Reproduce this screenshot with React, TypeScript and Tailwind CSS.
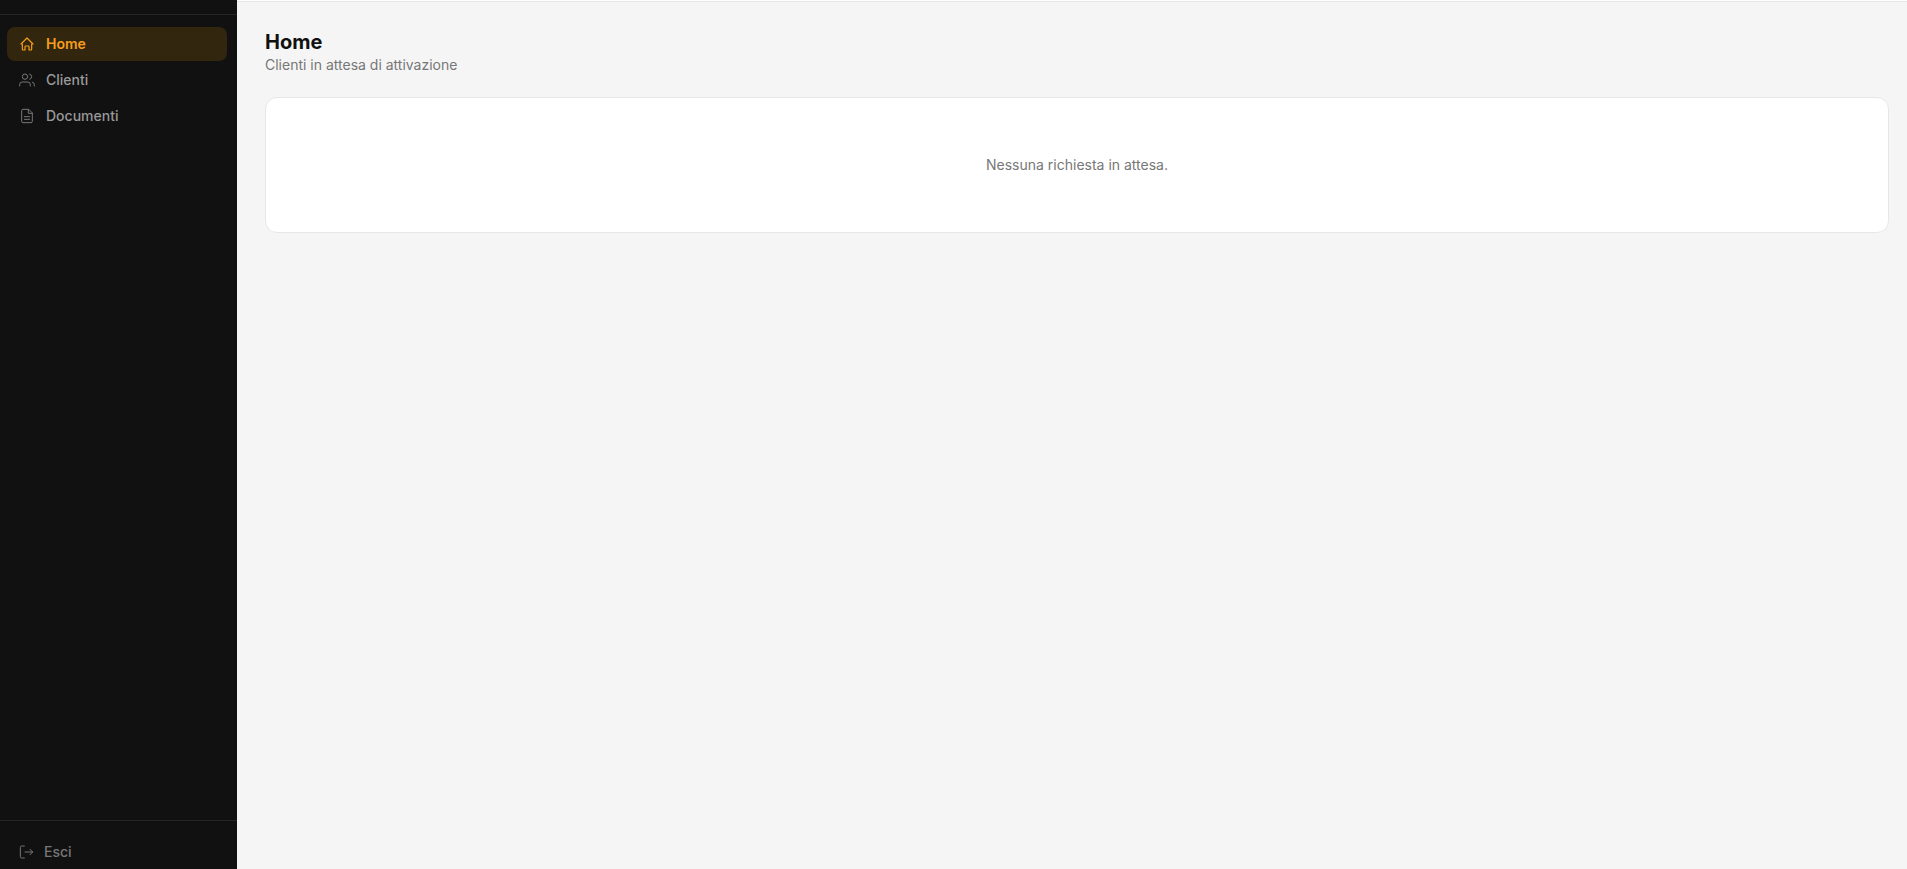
import type { ReactNode } from "react";

function Icon({ children }: { children: ReactNode }) {
    return (
        <svg
            viewBox="0 0 24 24"
            fill="none"
            stroke="currentColor"
            strokeWidth={1.5}
            strokeLinecap="round"
            strokeLinejoin="round"
            className="size-4 shrink-0"
            aria-hidden="true"
        >
            {children}
        </svg>
    );
}

const navItems = [
    {
        label: "Home",
        href: "#home",
        active: true,
        icon: (
            <path
                strokeWidth={1.8}
                d="M5 12H3l9-9 9 9h-2v8a1 1 0 0 1-1 1h-3v-5a1 1 0 0 0-1-1h-4a1 1 0 0 0-1 1v5H6a1 1 0 0 1-1-1z"
            />
        ),
    },
    {
        label: "Clienti",
        href: "#clienti",
        active: false,
        icon: (
            <>
                <path d="M17 21v-2a4 4 0 0 0-4-4H5a4 4 0 0 0-4 4v2" />
                <circle cx="9" cy="7" r="4" />
                <path d="M23 21v-2a4 4 0 0 0-3-3.87" />
                <path d="M16 3.13a4 4 0 0 1 0 7.75" />
            </>
        ),
    },
    {
        label: "Documenti",
        href: "#documenti",
        active: false,
        icon: (
            <>
                <path d="M14 2H6a2 2 0 0 0-2 2v16a2 2 0 0 0 2 2h12a2 2 0 0 0 2-2V8z" />
                <path d="M14 2v6h6" />
                <path d="M8 13h8" />
                <path d="M8 17h8" />
            </>
        ),
    },
];

function Sidebar() {
    return (
        <aside className="flex w-[237px] shrink-0 flex-col bg-[#111111]">
            <div className="h-[15px] border-b border-[#262626]" />
            <nav className="flex flex-1 flex-col gap-0.5 pt-3 pr-2.5 pl-[7px]">
                {navItems.map((item) => (
                    <a
                        key={item.label}
                        href={item.href}
                        aria-current={item.active ? "page" : undefined}
                        className={
                            item.active
                                ? "flex h-[34px] items-center gap-[11px] rounded-lg bg-[#33260f] px-3 text-sm font-semibold text-[#f59e1b]"
                                : "flex h-[34px] items-center gap-[11px] rounded-lg px-3 text-sm font-medium text-[#999999]"
                        }
                    >
                        <span className={item.active ? "" : "text-[#777777]"}>
                            <Icon>{item.icon}</Icon>
                        </span>
                        {item.label}
                    </a>
                ))}
            </nav>
            <div className="border-t border-[#262626] pt-3.5 pr-2.5 pl-[7px]">
                <button
                    type="button"
                    className="flex h-[34px] w-full items-center gap-[9px] rounded-lg px-3 text-sm font-medium text-[#777777]"
                >
                    <Icon>
                        <path d="M8 21H4a2 2 0 0 1-2-2V5a2 2 0 0 1 2-2h4" />
                        <path d="m16.5 8 4 4-4 4" />
                        <path d="M20.5 12H9" />
                    </Icon>
                    Esci
                </button>
            </div>
        </aside>
    );
}

export default function App() {
    return (
        <div className="flex min-h-screen bg-[#f5f5f5] font-['Inter',sans-serif]">
            <Sidebar />
            <div className="flex min-w-0 flex-1 flex-col">
                <header className="h-0.5 border-b border-[#e5e5e5] bg-white" />
                <main className="pt-7 pr-[18px] pl-7">
                    <h1 className="text-xl leading-6 font-bold text-[#111111]">Home</h1>
                    <p className="text-sm leading-[22px] text-[#777777]">
                        Clienti in attesa di attivazione
                    </p>
                    <section className="mt-[21px] rounded-xl border border-[#e7e7e7] bg-white px-6 py-14 text-center">
                        <p className="text-sm leading-[22px] text-[#777777]">
                            Nessuna richiesta in attesa.
                        </p>
                    </section>
                </main>
            </div>
        </div>
    );
}
